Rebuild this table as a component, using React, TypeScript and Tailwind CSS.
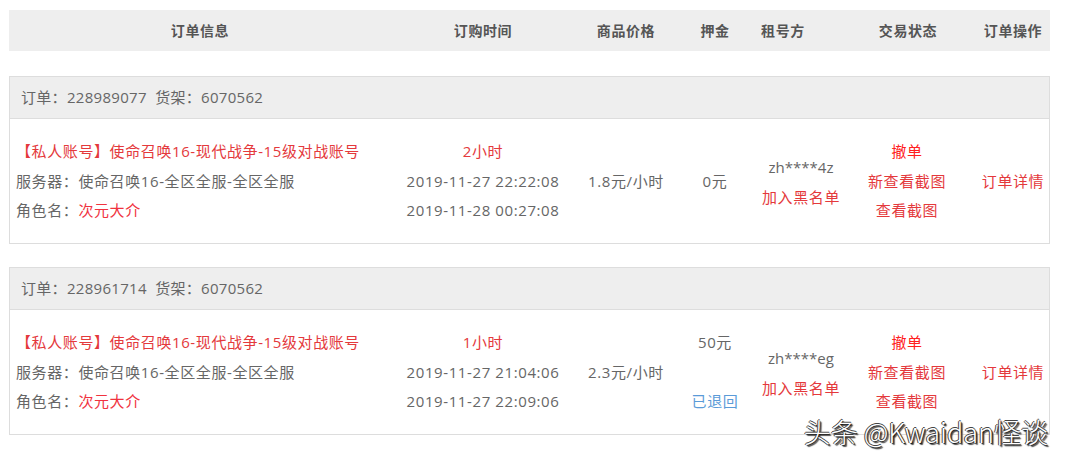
import React from "react";

type Order = {
  id: string;
  shelf: string;
  hours: string;
  start: string;
  end: string;
  price: string;
  deposit: string;
  refunded: boolean;
  renter: string;
};

const orders: Order[] = [
  {
    id: "228989077",
    shelf: "6070562",
    hours: "2小时",
    start: "2019-11-27 22:22:08",
    end: "2019-11-28 00:27:08",
    price: "1.8元/小时",
    deposit: "0元",
    refunded: false,
    renter: "zh****4z",
  },
  {
    id: "228961714",
    shelf: "6070562",
    hours: "1小时",
    start: "2019-11-27 21:04:06",
    end: "2019-11-27 22:09:06",
    price: "2.3元/小时",
    deposit: "50元",
    refunded: true,
    renter: "zh****eg",
  },
];

const font = { fontFamily: '"Open Sans", "Noto Sans CJK SC", sans-serif' };

function HeaderCell({ w, text }: { w: string; text: string }) {
  return (
    <div className={`${w} shrink-0 flex justify-center whitespace-nowrap`}>{text}</div>
  );
}

function OrderCard({ o, first }: { o: Order; first: boolean }) {
  return (
    <div className={`border border-[#dddddd] ${first ? "mt-[25px]" : "mt-[23px]"}`}>
      <div className="h-[42px] bg-[#eeeeee] border-b border-[#dddddd] flex items-center pl-[11px] text-[15px] text-[#666] tracking-[0.3px]">
        订单：{o.id}&nbsp;&nbsp;货架：{o.shelf}
      </div>
      <div className="h-[124px] pt-[1px] flex items-center text-[15px] text-[#666] whitespace-nowrap">
        <div className="w-[381px] shrink-0 pl-[6px] leading-[29.5px]">
          <div className="text-[#e4393c]">【私人账号】使命召唤16-现代战争-15级对战账号</div>
          <div>服务器：使命召唤16-全区全服-全区全服</div>
          <div>
            角色名：<span className="text-[#f0333f]">次元大介</span>
          </div>
        </div>
        <div className="w-[184px] shrink-0 flex flex-col items-center leading-[29.5px]">
          <div className="text-[#e4393c]">{o.hours}</div>
          <div>{o.start}</div>
          <div>{o.end}</div>
        </div>
        <div className="w-[102px] shrink-0 flex justify-center">{o.price}</div>
        <div className="w-[76px] shrink-0 flex flex-col items-center leading-[29.5px]">
          {o.refunded ? (
            <>
              <div>{o.deposit}</div>
              <div>&nbsp;</div>
              <div className="text-[#5b9bd8]">已退回</div>
            </>
          ) : (
            <div>{o.deposit}</div>
          )}
        </div>
        <div className="w-[96px] shrink-0 flex flex-col items-center leading-[30px]">
          <div className="tracking-normal">{o.renter}</div>
          <div className="text-[#e4393c]">加入黑名单</div>
        </div>
        <div className="w-[116px] shrink-0 flex flex-col items-center leading-[29.5px]">
          <div className="text-[#ff2020]">撤单</div>
          <div className="text-[#e4393c]">新查看截图</div>
          <div className="text-[#e4393c]">查看截图</div>
        </div>
        <div className="w-[96px] shrink-0 flex justify-center text-[#e4393c]">订单详情</div>
      </div>
    </div>
  );
}

export default function App() {
  return (
    <div className="relative w-[1080px] h-[463px] bg-white overflow-hidden" style={font}>
      <div className="w-[1041px] ml-[9px] pt-[10px] tracking-[0.6px]">
        <div className="h-[41px] bg-[#eeeeee] flex items-center text-[14px] font-bold text-[#555]">
          <HeaderCell w="w-[382px]" text="订单信息" />
          <HeaderCell w="w-[184px]" text="订购时间" />
          <HeaderCell w="w-[102px]" text="商品价格" />
          <HeaderCell w="w-[76px]" text="押金" />
          <HeaderCell w="w-[60px]" text="租号方" />
          <div className="w-[30px] shrink-0" />
          <HeaderCell w="w-[130px]" text="交易状态" />
          <HeaderCell w="w-[80px]" text="订单操作" />
        </div>
        {orders.map((o, i) => (
          <OrderCard key={o.id} o={o} first={i === 0} />
        ))}
      </div>
      <div
        className="absolute right-[32px] bottom-[11px] text-[27px] font-light text-white whitespace-nowrap"
        style={{
          fontFamily: '"Noto Sans CJK SC", "DejaVu Sans", sans-serif',
          textShadow:
            "1px 1px 1px #111, 2px 2px 1px #555, -1px 0 0 #444, 0 -1px 0 #444",
        }}
      >
        头条 @Kwaidan怪谈
      </div>
    </div>
  );
}
